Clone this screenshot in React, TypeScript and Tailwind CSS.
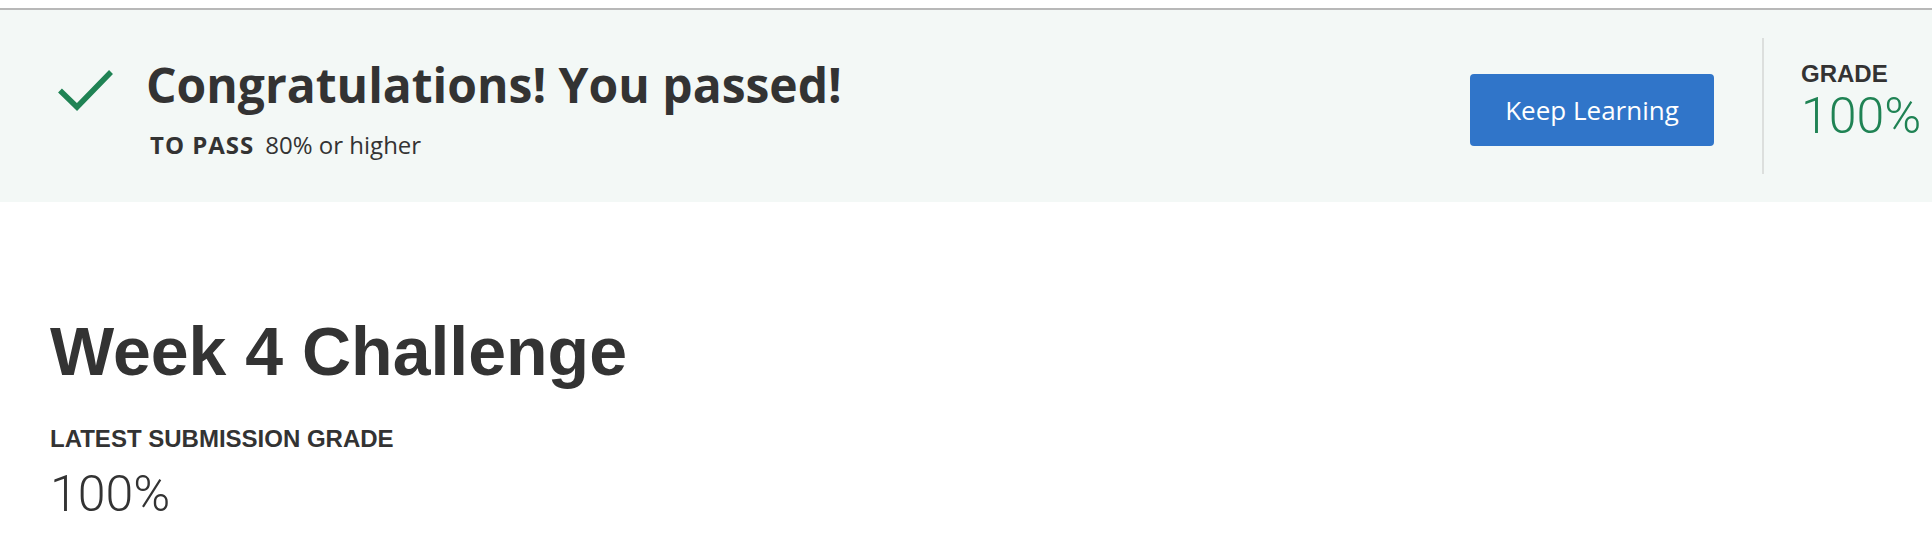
import React from 'react'

// quiz result page: pass banner + submission grade

function CheckMark() {
  return (
    <svg width="56" height="44" viewBox="0 0 56 44" className="shrink-0">
      <polyline
        points="2,21.5 19,38 53,3"
        fill="none"
        stroke="#1f8354"
        strokeWidth="5.5"
        strokeLinecap="butt"
        strokeLinejoin="miter"
      />
    </svg>
  )
}

export default function App() {
  const grade = 100
  const toPass = 80

  return (
    <div className="min-h-screen bg-white pt-2 text-[#333333]">
      {/* pass banner */}
      <div className="border-t-2 border-[#b8b8b8]">
        <div className="flex h-[192px] items-center bg-[#f3f8f6] pl-[58px]">
          <div className="mb-[30px]">
            <CheckMark />
          </div>
          <div className="ml-[32px] mt-[6px] flex flex-col font-['Open_Sans',sans-serif]">
            <h2 className="text-[48px] font-bold leading-none">Congratulations! You passed!</h2>
            <div className="mt-[24px] flex items-baseline pl-[4px] text-[24px] leading-none">
              <span className="font-bold tracking-[1px]">TO PASS</span>
              <span className="ml-[11px]">{toPass}% or higher</span>
            </div>
          </div>
          <div className="flex-1" />
          <button className="mt-[8px] flex h-[72px] w-[244px] items-center justify-center rounded-[4px] bg-[#3075c9] font-['Open_Sans',sans-serif] text-[26px] font-medium text-white">
            Keep Learning
          </button>
          <div className="ml-[48px] h-[136px] w-[2px] bg-[#dcdfdd]" />
          <div className="ml-[37px] mb-[9px] flex w-[131px] flex-col">
            <div className="font-['Liberation_Sans',Arial,sans-serif] text-[24px] font-bold leading-none">GRADE</div>
            <div className="mt-[5px] font-['Roboto',sans-serif] text-[50px] font-light leading-none text-[#1f8354]">
              {grade}%
            </div>
          </div>
        </div>
      </div>

      {/* submission */}
      <div className="pl-[50px] pt-[115px]">
        <h1 className="font-['Liberation_Sans',Arial,sans-serif] text-[68px] font-bold leading-none">Week 4 Challenge</h1>
        <div className="mt-[42px] font-['Liberation_Sans',Arial,sans-serif] text-[24px] font-bold leading-none">
          LATEST SUBMISSION GRADE
        </div>
        <div className="mt-[18px] font-['Roboto',sans-serif] text-[50px] font-light leading-none">{grade}%</div>
      </div>
    </div>
  )
}
